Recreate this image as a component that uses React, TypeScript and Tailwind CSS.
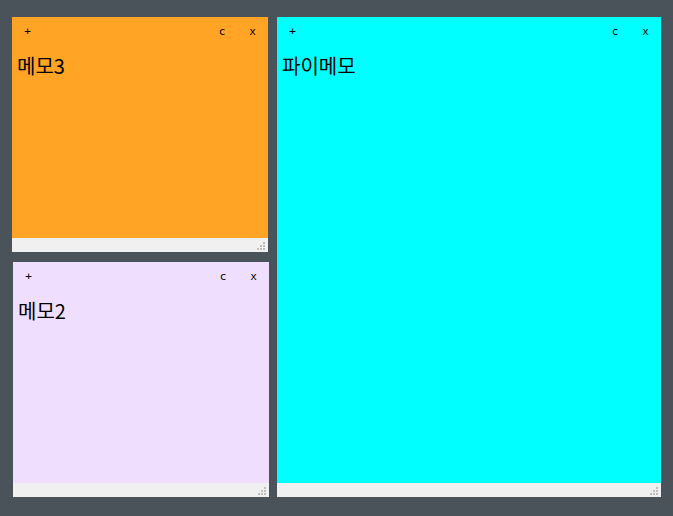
import React from "react";

function Grip() {
  const dots = [
    [6, 0],
    [3, 3],
    [6, 3],
    [0, 6],
    [3, 6],
    [6, 6],
  ];
  return (
    <svg width="8" height="8" viewBox="0 0 8 8" className="absolute right-[3px] bottom-[2px]">
      {dots.map(([x, y], i) => (
        <rect key={i} x={x} y={y} width="2" height="2" fill="#bdbdbd" />
      ))}
    </svg>
  );
}

function Note({ bg, text, className }: { bg: string; text: string; className: string }) {
  return (
    <div className={`flex flex-col ${className}`}>
      <div className={`flex-1 flex flex-col ${bg}`}>
        <div className="flex h-[29px] items-center justify-between text-[11px] text-black" style={{ fontFamily: '"DejaVu Sans Mono", monospace' }}>
          <div className="w-[31px] text-center leading-none">+</div>
          <div className="flex">
            <div className="w-[30px] text-center leading-none">c</div>
            <div className="w-[31px] text-center leading-none">x</div>
          </div>
        </div>
        <div
          className="mt-[5px] pl-[5px] text-[20px] leading-[29px] text-black"
          style={{ fontFamily: '"Noto Sans CJK KR", "Noto Sans", sans-serif' }}
        >
          {text}
        </div>
      </div>
      <div className="relative h-[14px] bg-[#f0f0f0]">
        <Grip />
      </div>
    </div>
  );
}

export default function App() {
  return (
    <div className="w-[673px] h-[516px] bg-[#4b535a] pt-[17px] pl-[12px] flex gap-[9px]">
      <div className="flex flex-col gap-[10px] w-[256px]">
        <Note bg="bg-[#ffa425]" text="메모3" className="w-[256px] h-[235px]" />
        <Note bg="bg-[#efdefd]" text="메모2" className="ml-[1px] w-[256px] h-[235px] shrink-0" />
      </div>
      <Note bg="bg-[#00ffff]" text="파이메모" className="w-[384px] h-[480px]" />
    </div>
  );
}
